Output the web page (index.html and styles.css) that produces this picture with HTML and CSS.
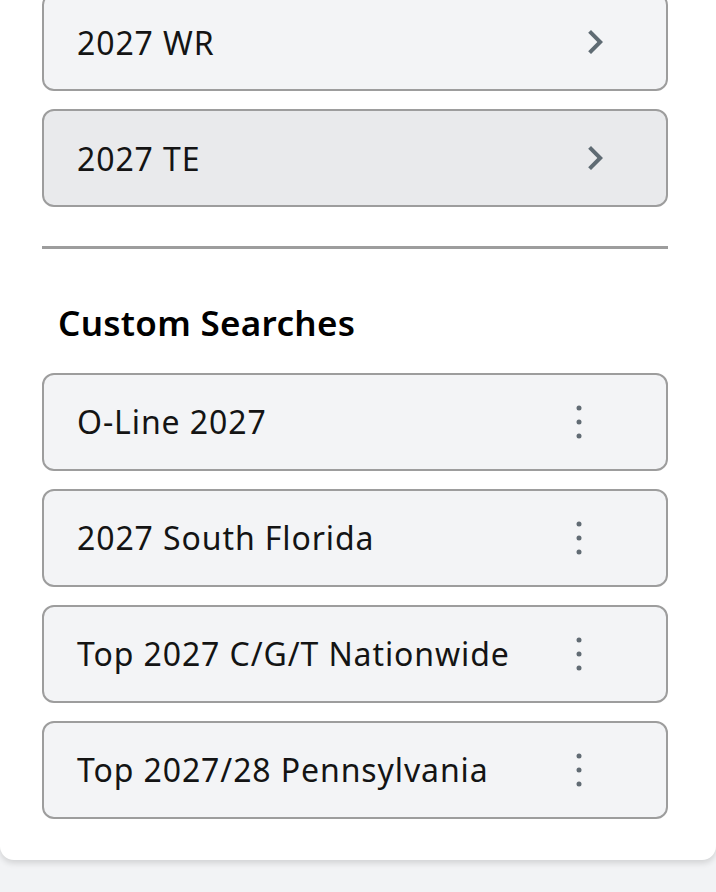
FILE: index.html
```html
<!DOCTYPE html>
<html lang="en">
<head>
  <meta charset="UTF-8" />
  <meta name="viewport" content="width=device-width, initial-scale=1.0"/>
  <title>Saved Searches</title>
  <link rel="stylesheet" href="styles.css">
</head>
<body>
  <div class="card">
    <ul class="list">
      <li class="item">
        <span>2027 WR</span>
        <svg class="chevron" viewBox="0 0 24 24"><path d="M10 6L8.59 7.41 13.17 12l-4.58 4.59L10 18l6-6z"/></svg>
      </li>
      <li class="item active">
        <span>2027 TE</span>
        <svg class="chevron" viewBox="0 0 24 24"><path d="M10 6L8.59 7.41 13.17 12l-4.58 4.59L10 18l6-6z"/></svg>
      </li>
    </ul>

    <hr class="divider">

    <h2>Custom Searches</h2>
    <ul class="list">
      <li class="item">
        <span>O-Line 2027</span>
        <svg class="kebab" viewBox="0 0 12 36"><circle cx="6" cy="4" r="2.5"/><circle cx="6" cy="18" r="2.5"/><circle cx="6" cy="32" r="2.5"/></svg>
      </li>
      <li class="item">
        <span>2027 South Florida</span>
        <svg class="kebab" viewBox="0 0 12 36"><circle cx="6" cy="4" r="2.5"/><circle cx="6" cy="18" r="2.5"/><circle cx="6" cy="32" r="2.5"/></svg>
      </li>
      <li class="item">
        <span>Top 2027 C/G/T Nationwide</span>
        <svg class="kebab" viewBox="0 0 12 36"><circle cx="6" cy="4" r="2.5"/><circle cx="6" cy="18" r="2.5"/><circle cx="6" cy="32" r="2.5"/></svg>
      </li>
      <li class="item">
        <span>Top 2027/28 Pennsylvania</span>
        <svg class="kebab" viewBox="0 0 12 36"><circle cx="6" cy="4" r="2.5"/><circle cx="6" cy="18" r="2.5"/><circle cx="6" cy="32" r="2.5"/></svg>
      </li>
    </ul>
  </div>
</body>
</html>
```

FILE: styles.css
```css
body {
  margin: 0;
  font-family: "Noto Sans", "Open Sans", sans-serif;
  background-color: #f2f3f5;
  color: #141414;
  height: 892px;
  overflow: hidden;
}
.card {
  background-color: #fff;
  margin-top: -30px;
  padding: 23px 48px 41px 42px;
  border-radius: 0 0 14px 14px;
  box-shadow: 0 3px 6px rgba(0, 0, 0, 0.14);
}
.list {
  list-style: none;
  margin: 0;
  padding: 0;
  display: flex;
  flex-direction: column;
  gap: 18px;
}
.item {
  display: flex;
  align-items: center;
  justify-content: space-between;
  height: 94px;
  padding-left: 33px;
  border: 2px solid #9d9d9d;
  border-radius: 12px;
  background-color: #f3f4f6;
  font-size: 32px;
  letter-spacing: 0.9px;
}
.item.active {
  background-color: #e9eaec;
}
.chevron {
  width: 48px;
  height: 48px;
  margin-right: 47px;
  fill: #5f6b73;
}
.kebab {
  width: 12px;
  height: 36px;
  margin-right: 81px;
  fill: #616b73;
}
.divider {
  border: none;
  height: 3px;
  background-color: #9d9d9d;
  margin: 39px 0 0;
}
h2 {
  font-size: 35px;
  font-weight: 600;
  letter-spacing: 0.3px;
  color: #000;
  margin: 55px 0 30px 16px;
  line-height: 1.1;
}
```
